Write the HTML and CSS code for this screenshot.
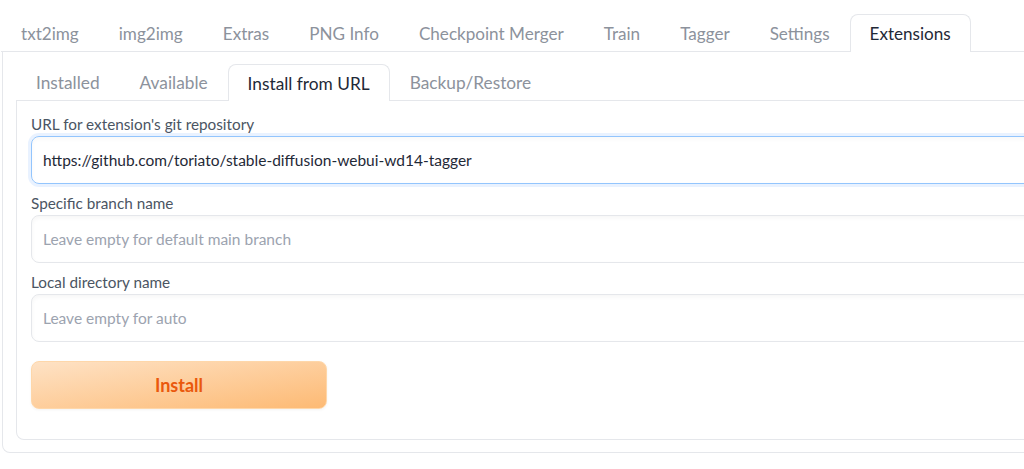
FILE: index.html
```html
<!DOCTYPE html>
<html>
<head>
<meta charset="utf-8">
<link rel="stylesheet" href="styles.css">
</head>
<body>
<div class="app">
  <div class="tabbar top-tabs">
    <div class="tab">txt2img</div>
    <div class="tab">img2img</div>
    <div class="tab">Extras</div>
    <div class="tab">PNG Info</div>
    <div class="tab">Checkpoint Merger</div>
    <div class="tab">Train</div>
    <div class="tab">Tagger</div>
    <div class="tab">Settings</div>
    <div class="tab selected">Extensions</div>
  </div>
  <div class="panel outer">
    <div class="tabbar sub-tabs">
      <div class="tab">Installed</div>
      <div class="tab">Available</div>
      <div class="tab selected">Install from URL</div>
      <div class="tab">Backup/Restore</div>
    </div>
    <div class="panel inner">
      <div class="field">
        <label class="label">URL for extension's git repository</label>
        <div class="input focused">https://github.com/toriato/stable-diffusion-webui-wd14-tagger</div>
      </div>
      <div class="field">
        <label class="label">Specific branch name</label>
        <div class="input placeholder">Leave empty for default main branch</div>
      </div>
      <div class="field">
        <label class="label">Local directory name</label>
        <div class="input placeholder">Leave empty for auto</div>
      </div>
      <button class="install">Install</button>
    </div>
  </div>
</div>
</body>
</html>
```

FILE: styles.css
```css
html, body {
  margin: 0;
  padding: 0;
  background: #ffffff;
  overflow: hidden;
}
body {
  font-family: "Lato", "Source Sans Pro", "Liberation Sans", sans-serif;
  color: #1f2937;
}
.app {
  width: 1120px;
  padding-left: 1px;
}
.tabbar {
  display: flex;
  border-bottom: 1px solid #e5e7eb;
}
.top-tabs {
  padding-top: 14px;
}
.tab {
  height: 36px;
  display: flex;
  align-items: center;
  padding: 0 19px;
  border: 1px solid transparent;
  border-bottom: none;
  border-radius: 8px 8px 0 0;
  font-size: 17.1px;
  color: #8c929c;
  margin-bottom: -1px;
  background: transparent;
}
.tab.selected {
  border-color: #e5e7eb;
  background: #ffffff;
  color: #1f2937;
  height: 37px;
}
.top-tabs .tab {
  height: 36px;
}
.top-tabs .tab.selected {
  height: 37px;
}
.panel {
  border: 1px solid #e5e7eb;
  border-top: none;
  border-radius: 0 0 8px 8px;
  background: #ffffff;
}
.outer {
  margin-left: 1px;
  padding: 12px 0 12px 13px;
}
.sub-tabs .tab {
  height: 35px;
  font-size: 17.3px;
}
.sub-tabs .tab.selected {
  height: 36px;
}
.inner {
  padding: 12px 0 30px 14px;
  display: flex;
  flex-direction: column;
  gap: 8px;
}
.field {
  display: flex;
  flex-direction: column;
}
.label {
  font-size: 15.3px;
  line-height: 22px;
  color: #4b5563;
  margin-bottom: 1px;
}
.input {
  height: 46px;
  border: 1px solid #e5e7eb;
  border-radius: 8px;
  padding: 0 11px;
  display: flex;
  align-items: center;
  font-size: 15.5px;
  color: #1f2937;
  box-shadow: inset 0 2px 4px rgba(0, 0, 0, 0.04);
}
.input.focused {
  border-color: #93c5fd;
  box-shadow: 0 0 0 3px rgba(191, 219, 254, 0.35), inset 0 2px 4px rgba(0, 0, 0, 0.03);
}
.input.placeholder {
  color: #9ca3af;
}
.install {
  margin-top: 11px;
  width: 296px;
  height: 48px;
  border: 1px solid #fed7aa;
  border-radius: 8px;
  background: linear-gradient(to bottom right, #fee2c5, #fdba74);
  color: #ea580c;
  font-family: inherit;
  font-size: 18px;
  font-weight: 700;
  box-shadow: 0 1px 3px rgba(0, 0, 0, 0.05);
}
```
